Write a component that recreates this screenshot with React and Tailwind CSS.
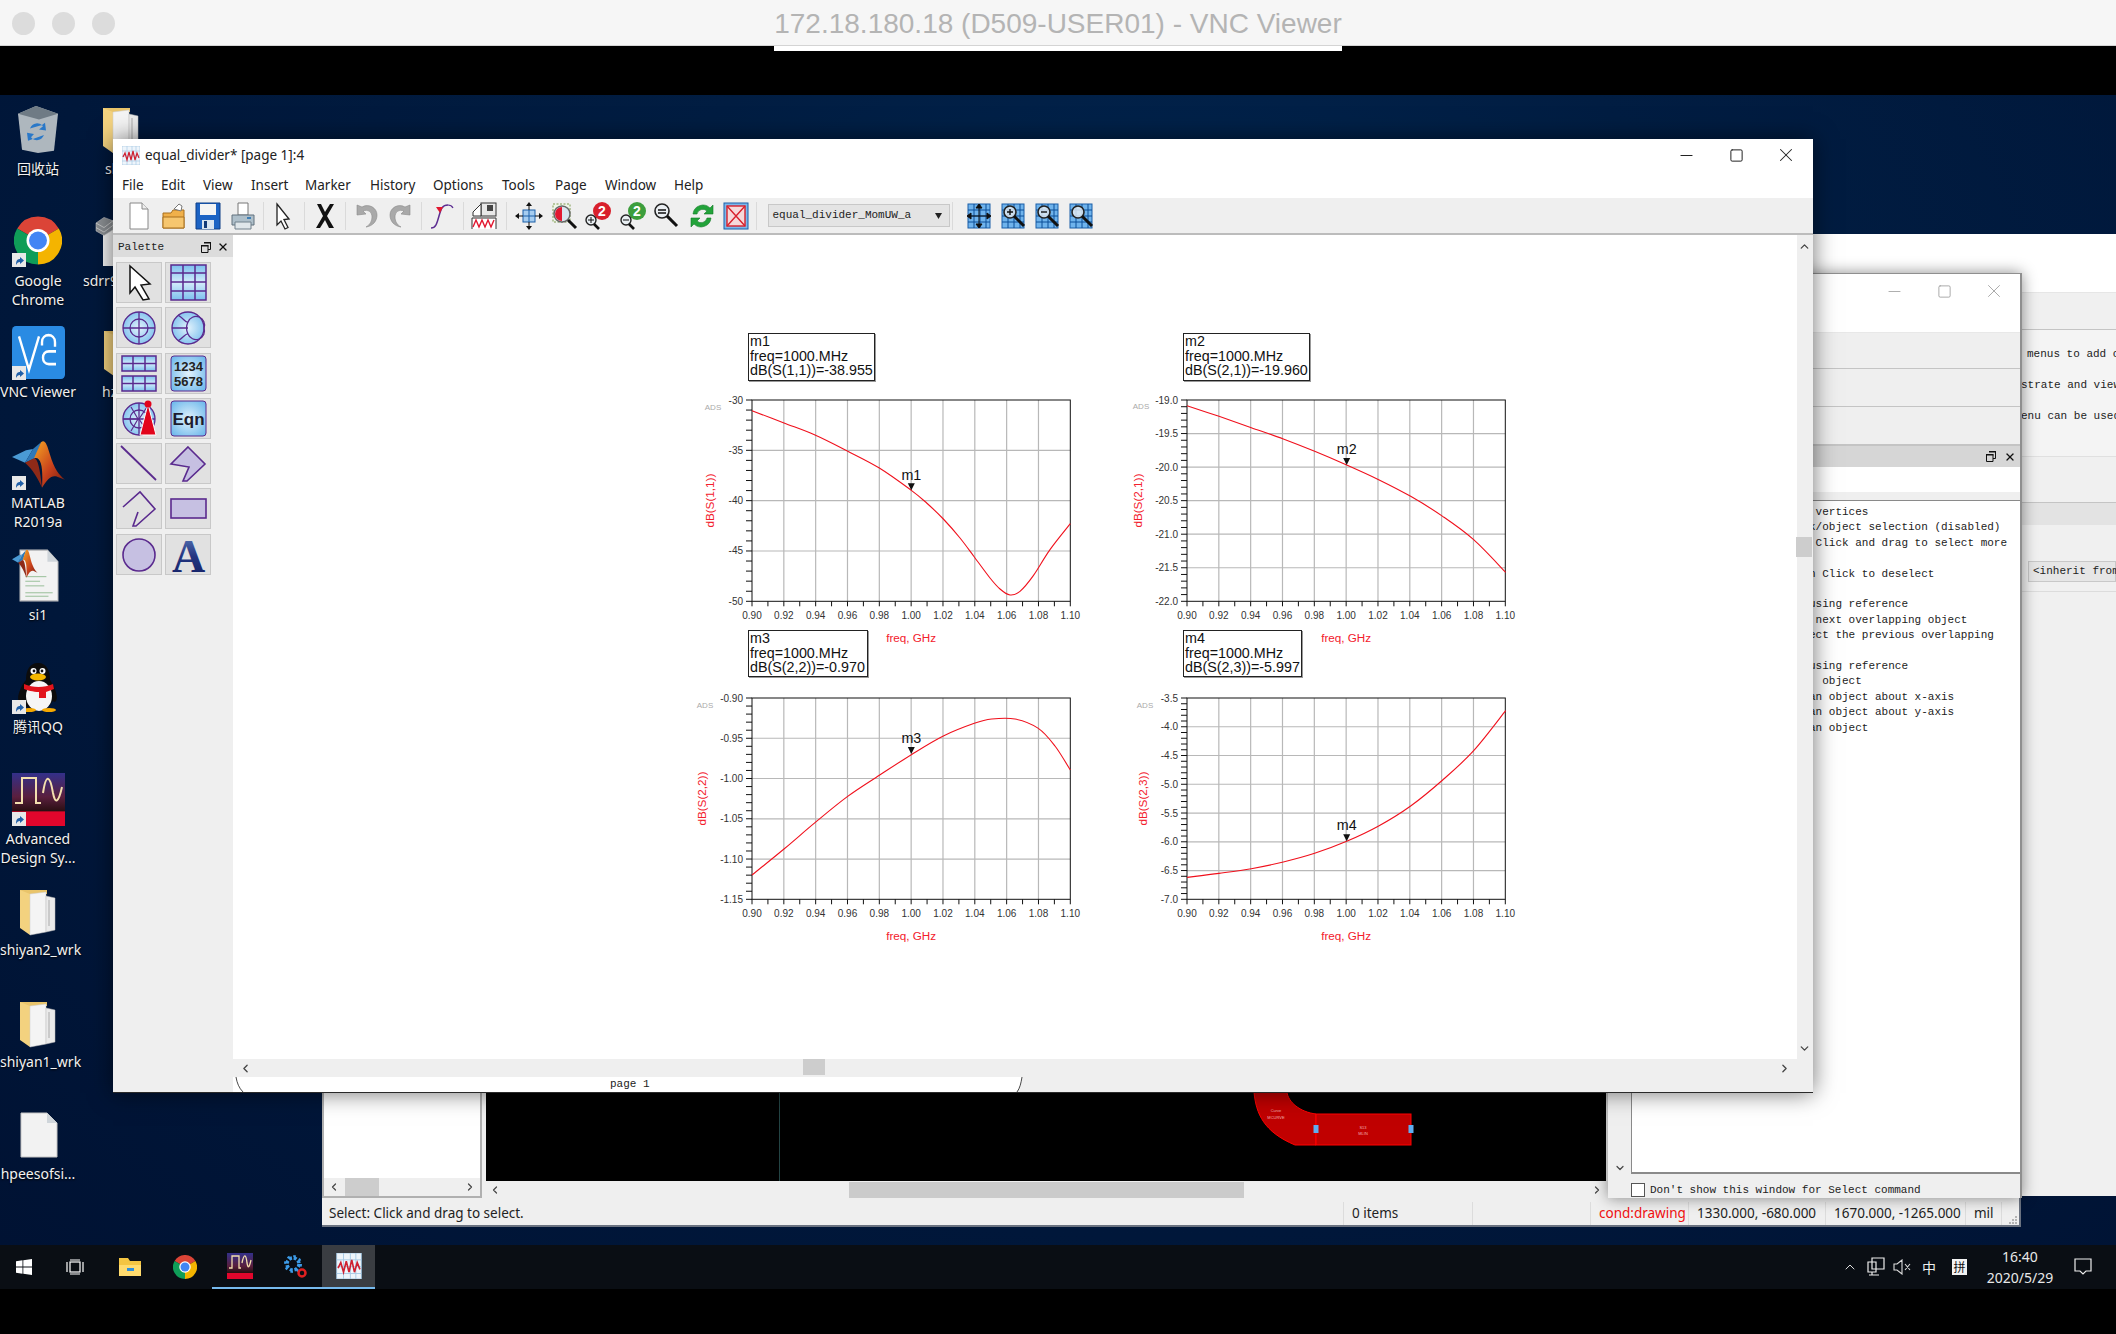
import { ChevronLeft, ChevronRight, ChevronUp, ChevronDown, X, Minus, Square } from "lucide-react";

const smooth = (pts) => {
  let d = `M${pts[0][0]} ${pts[0][1]}`;
  for (let i = 0; i < pts.length - 1; i++) {
    const p0 = pts[i - 1] || pts[i];
    const p1 = pts[i];
    const p2 = pts[i + 1];
    const p3 = pts[i + 2] || p2;
    const c1 = [p1[0] + (p2[0] - p0[0]) / 6, p1[1] + (p2[1] - p0[1]) / 6];
    const c2 = [p2[0] - (p3[0] - p1[0]) / 6, p2[1] - (p3[1] - p1[1]) / 6];
    d += ` C${c1[0]} ${c1[1]} ${c2[0]} ${c2[1]} ${p2[0]} ${p2[1]}`;
  }
  return d;
};

const PLOT_W = 318.3;
const PLOT_H = 201.3;
const X_LABELS = ["0.90", "0.92", "0.94", "0.96", "0.98", "1.00", "1.02", "1.04", "1.06", "1.08", "1.10"];

// points are read off the 3x crops, cx/cy is the plot corner in that crop
function Chart({ className, name, ylabel, ylabels, ylabelX, adsX, adsY, cx, cy, points, tip, labelY }) {
  const ox = 60;
  const oy = 15;
  const pts = points.map(([a, b]) => [(a - cx) / 3, (b - cy) / 3]);
  const n = ylabels.length - 1;
  const tx = (tip[0] - cx) / 3;
  const ty = (tip[1] - cy) / 3;
  return (
    <svg className={`absolute ${className}`} width="430" height="260" viewBox="0 0 430 260">
      <g transform={`translate(${ox} ${oy})`} fontFamily="Liberation Sans, sans-serif">
        {X_LABELS.map((l, i) => {
          const x = (i * PLOT_W) / 10;
          return (
            <g key={l}>
              {i > 0 && i < 10 && <line x1={x} x2={x} y1="0" y2={PLOT_H} stroke="#b8b8b8" strokeWidth="1.2" />}
              <text x={x} y={PLOT_H + 18} fontSize="10" textAnchor="middle" fill="#333">{l}</text>
            </g>
          );
        })}
        {Array.from({ length: 21 }).map((_, i) => (
          <line key={i} x1={(i * PLOT_W) / 20} x2={(i * PLOT_W) / 20} y1={PLOT_H} y2={PLOT_H + 5} stroke="#111" />
        ))}
        {ylabels.map((l, i) => {
          const y = (i * PLOT_H) / n;
          return (
            <g key={l}>
              {i > 0 && i < n && <line x1="0" x2={PLOT_W} y1={y} y2={y} stroke="#b8b8b8" strokeWidth="1.2" />}
              <text x="-9" y={y + 3.5} fontSize="10" textAnchor="end" fill="#333">{l}</text>
            </g>
          );
        })}
        {Array.from({ length: n * 5 + 1 }).map((_, i) => {
          const y = (i * PLOT_H) / (n * 5);
          return <line key={i} x1="-6" x2="0" y1={y} y2={y} stroke="#111" />;
        })}
        <rect x="0" y="0" width={PLOT_W} height={PLOT_H} fill="none" stroke="#111" strokeWidth="1" />
        <path d={smooth(pts)} fill="none" stroke="#f0101c" strokeWidth="1.1" />
        <polygon points={`${tx - 3.5},${ty - 7} ${tx + 3.5},${ty - 7} ${tx},${ty}`} fill="#111" />
        <text x={tx} y={(labelY - cy) / 3 + 5} fontSize="14.3" textAnchor="middle" fill="#111">{name}</text>
        <text x={PLOT_W / 2} y={PLOT_H + 41} fontSize="11.7" textAnchor="middle" fill="#f3202c">freq, GHz</text>
        <text
          transform={`translate(${ylabelX} ${PLOT_H / 2}) rotate(-90)`}
          fontSize="11.7"
          textAnchor="middle"
          dominantBaseline="middle"
          fill="#f3202c"
        >
          {ylabel}
        </text>
        <text x={adsX} y={adsY} fontSize="8" textAnchor="middle" fill="#aaa">ADS</text>
      </g>
    </svg>
  );
}

function MarkerBox({ className, name, value }) {
  return (
    <div className={`absolute border-[1.5px] border-[#222] pl-[1px] text-[14.3px] leading-[14.5px] text-[#111] shadow-[1px_1px_0_#999] ${className}`}>
      <div>{name}</div>
      <div>freq=1000.MHz</div>
      <div>{value}</div>
    </div>
  );
}

const Tb = ({ children, className = "" }) => (
  <svg className={`shrink-0 ${className}`} width="28" height="28" viewBox="0 0 28 28">{children}</svg>
);
const Slot = ({ children }) => <div className="flex w-[34.5px] shrink-0 items-center justify-center">{children}</div>;
const Sep = ({ className }) => (
  <div className={`flex shrink-0 justify-center ${className}`}><div className="h-[28px] w-[1px] bg-[#dadada]" /></div>
);
const Ctl = ({ children }) => <div className="flex w-[50px] shrink-0 items-center justify-center">{children}</div>;

const Mag = ({ x = 10, y = 10, r = 6 }) => (
  <>
    <circle cx={x} cy={y} r={r} fill="#e8eef2" fillOpacity=".8" stroke="#222" strokeWidth="1.6" />
    <line x1={x + r * 0.7} y1={y + r * 0.7} x2={x + r + 8} y2={y + r + 8} stroke="#111" strokeWidth="3" />
  </>
);
const GridIcon = ({ children }) => (
  <Tb>
    <rect x="3" y="2" width="22" height="24" fill="#6fb3ec" stroke="#1b5fa8" />
    {[8, 14, 20].map((v) => <line key={v} x1={v + 1} x2={v + 1} y1="2" y2="26" stroke="#0d4f98" />)}
    {[8, 14, 20].map((v) => <line key={v} x1="3" x2="25" y1={v} y2={v} stroke="#0d4f98" />)}
    {children}
  </Tb>
);

function Toolbar() {
  return (
    <div className="flex h-[37px] shrink-0 items-center border-b-2 border-[#bcbcbc] bg-[#efefef] pl-[9px]">
      <Slot>
        <Tb><path d="M5 1h12l6 6v20H5z" fill="#fff" stroke="#888" /><path d="M17 1v6h6" fill="#eee" stroke="#888" /></Tb>
      </Slot>
      <Slot>
        <Tb>
          <path d="M3 11h8l2-3h11v18H3z" fill="#f0b04a" stroke="#a86f1c" />
          <path d="M14 7l5-5 3 2-1 5z" fill="#fff" stroke="#777" />
          <path d="M3 15h21v11H3z" fill="#f6c66f" stroke="#a86f1c" />
        </Tb>
      </Slot>
      <Slot>
        <Tb>
          <path d="M2 1h24v26H2z" fill="#1c63c4" stroke="#0f3f86" />
          <rect x="6" y="2" width="16" height="11" fill="#f4f4f4" />
          <rect x="8" y="18" width="12" height="9" fill="#d9e4f0" />
          <rect x="10" y="19" width="3" height="7" fill="#123a78" />
        </Tb>
      </Slot>
      <Slot>
        <Tb>
          <path d="M9 1h10v12H9z" fill="#fff" stroke="#777" />
          <path d="M3 13h22v10H3z" fill="#aebfca" stroke="#60707c" />
          <path d="M6 20h16v7H6z" fill="#dfe6ea" stroke="#70808c" />
          <rect x="18" y="15" width="4" height="2" fill="#3f7fb5" />
        </Tb>
      </Slot>
      <Sep className="w-[6px]" />
      <Slot>
        <Tb><path d="M8 2l12 15-5 .5 4 8-3 1.5-4-8-4 4z" fill="#fff" stroke="#222" strokeWidth="1.3" /></Tb>
      </Slot>
      <Sep className="w-[7px]" />
      <Slot>
        <Tb><path d="M6 2h4l4 8 5-8h4l-7 12 7 12h-5l-4-8-5 8H5l7-12z" fill="#111" /></Tb>
      </Slot>
      <Sep className="w-[7px]" />
      <Slot>
        <Tb>
          <path d="M5 3v10l9-1-3-3c5-2 9 1 9 6 0 4-2 8-6 10 7-1 11-6 11-12 0-7-8-12-15-8z" fill="#a9a9a9" stroke="#8a8a8a" strokeWidth=".6" />
        </Tb>
      </Slot>
      <Slot>
        <Tb>
          <path d="M23 3v10l-9-1 3-3c-5-2-9 1-9 6 0 4 2 8 6 10-7-1-11-6-11-12 0-7 8-12 15-8z" fill="#a9a9a9" stroke="#8a8a8a" strokeWidth=".6" />
        </Tb>
      </Slot>
      <Sep className="w-[7px]" />
      <Slot>
        <Tb>
          <path d="M3 26c5 0 6-5 8-12s3-11 9-11" fill="none" stroke="#5c2d91" strokeWidth="1.5" />
          <path d="M8 5l7 0-3 6z" fill="#e21830" />
          <path d="M20 3c3 0 4 1 5 3" fill="none" stroke="#5c2d91" strokeWidth="1.2" />
        </Tb>
      </Slot>
      <Sep className="w-[7px]" />
      <Slot>
        <Tb>
          <rect x="11" y="1" width="15" height="13" fill="#e8e8e8" stroke="#333" />
          <rect x="17" y="3" width="6" height="6" fill="#444" />
          <path d="M3 10l8-8v12H3z" fill="#fff" stroke="#333" />
          <path d="M2 27v-11h24v11" fill="#fff" stroke="#333" />
          <path d="M3 25l3-7 3 7 3-7 3 7 3-7 3 7 3-7" fill="none" stroke="#e21830" strokeWidth="1.4" />
        </Tb>
      </Slot>
      <Sep className="w-[11px]" />
      <Slot>
        <Tb>
          <rect x="8" y="8" width="12" height="12" fill="#a6cdf0" stroke="#1b5fa8" />
          <path d="M14 8v12M8 14h12" stroke="#1b5fa8" />
          <path d="M14 0l3 4h-6zM14 28l3-4h-6zM0 14l4-3v6zM28 14l-4-3v6z" fill="#111" />
          <path d="M14 4v4M14 20v4M4 14h4M20 14h4" stroke="#111" />
        </Tb>
      </Slot>
      <Slot>
        <Tb>
          <rect x="3" y="2" width="17" height="18" fill="#eef6e8" stroke="#7f9a50" strokeDasharray="2 1.5" />
          <circle cx="12" cy="12" r="8" fill="#d9e4ee" stroke="#666" strokeWidth="1.5" />
          <path d="M12 5a7 7 0 0 0-7 7 7 7 0 0 0 7 7z" fill="#e21830" />
          <line x1="18" y1="18" x2="26" y2="26" stroke="#111" strokeWidth="3" />
        </Tb>
      </Slot>
      <Slot>
        <Tb>
          <circle cx="18" cy="9" r="9" fill="#d8202c" />
          <text x="18" y="14" fontSize="14" fontWeight="700" textAnchor="middle" fill="#fff" fontFamily="Liberation Sans">2</text>
          <circle cx="7" cy="18" r="5" fill="#e8eef2" stroke="#222" strokeWidth="1.4" />
          <path d="M4 18h6M7 15v6" stroke="#111" />
          <line x1="10" y1="22" x2="15" y2="27" stroke="#111" strokeWidth="2.6" />
        </Tb>
      </Slot>
      <Slot>
        <Tb>
          <circle cx="18" cy="9" r="9" fill="#3c9e3c" />
          <text x="18" y="14" fontSize="14" fontWeight="700" textAnchor="middle" fill="#fff" fontFamily="Liberation Sans">2</text>
          <circle cx="7" cy="18" r="5" fill="#e8eef2" stroke="#222" strokeWidth="1.4" />
          <path d="M4 18h6" stroke="#111" />
          <line x1="10" y1="22" x2="15" y2="27" stroke="#111" strokeWidth="2.6" />
        </Tb>
      </Slot>
      <Slot>
        <Tb>
          <Mag x={9} y={9} r={7} />
          <path d="M5 8h8M5 11h8" stroke="#111" strokeWidth="1.4" />
        </Tb>
      </Slot>
      <Slot>
        <Tb>
          <path d="M5 12A10 10 0 0 1 22 6l3-3v9h-9l3-3A6 6 0 0 0 9 12z" fill="#22a33a" stroke="#127a26" strokeWidth=".6" />
          <path d="M23 16A10 10 0 0 1 6 22l-3 3v-9h9l-3 3a6 6 0 0 0 10-3z" fill="#22a33a" stroke="#127a26" strokeWidth=".6" />
        </Tb>
      </Slot>
      <Slot>
        <Tb>
          <rect x="2" y="1" width="24" height="26" fill="#7db7ea" stroke="#1b5fa8" />
          <rect x="5" y="4" width="18" height="20" fill="#f6d9da" stroke="#d8202c" strokeWidth="1.4" />
          <path d="M5 4l18 20M23 4L5 24" stroke="#d8202c" strokeWidth="1.4" />
        </Tb>
      </Slot>
      <Sep className="w-[5px]" />
      <div className="ml-[9px] flex h-[23px] w-[182px] shrink-0 items-center justify-between border border-[#c8c8c8] bg-[#e4e4e4] pr-[7px] pl-[4px] font-['Liberation_Mono'] text-[11px] text-[#222]">
        <span>equal_divider_MomUW_a</span>
        <svg width="7" height="6" viewBox="0 0 7 6"><path d="M0 0h7L3.500 6z" fill="#222" /></svg>
      </div>
      <Sep className="w-[5px]" />
      <div className="ml-[7px] flex">
        {[
          <path key="a" d="M14 3v22M3 14h22M14 2l3 4h-6zM14 26l3-4h-6zM2 14l4-3v6zM26 14l-4-3v6z" stroke="#111" fill="#111" strokeWidth="1" />,
          <g key="b"><Mag x={11} y={10} r={6} /><path d="M8 10h6M11 7v6" stroke="#111" strokeWidth="1.4" /></g>,
          <g key="c"><Mag x={11} y={10} r={6} /><path d="M8 10h6" stroke="#111" strokeWidth="1.4" /></g>,
          <g key="d"><Mag x={11} y={10} r={6} /></g>,
        ].map((icon, i) => (
          <div key={i} className="flex w-[34px] shrink-0 justify-center"><GridIcon>{icon}</GridIcon></div>
        ))}
      </div>
    </div>
  );
}

const PURPLE = "#5a2a8e";
const Sky = () => (
  <defs>
    <linearGradient id="sky" x1="0" y1="0" x2="0" y2="1">
      <stop offset="0" stopColor="#7cc0ee" />
      <stop offset=".5" stopColor="#d3ecfb" />
      <stop offset="1" stopColor="#7cc0ee" />
    </linearGradient>
    <radialGradient id="sky2" cx=".5" cy=".5" r=".7">
      <stop offset="0" stopColor="#e2f2fc" />
      <stop offset="1" stopColor="#64b4ea" />
    </radialGradient>
    <linearGradient id="navy" x1="0" y1="0" x2="0" y2="1">
      <stop offset="0" stopColor="#5f7fc0" />
      <stop offset=".5" stopColor="#23357f" />
      <stop offset="1" stopColor="#111d62" />
    </linearGradient>
  </defs>
);
const Polar = () => (
  <g fill="none" stroke={PURPLE} strokeWidth="1.3">
    <circle cx="23" cy="21" r="16" fill="url(#sky2)" />
    <circle cx="23" cy="21" r="9" />
    <path d="M7 21h32M23 5v32" />
  </g>
);
const Smith = () => (
  <g fill="none" stroke={PURPLE} strokeWidth="1.3">
    <circle cx="23" cy="21" r="16" fill="url(#sky2)" />
    <path d="M39 21a8 8 0 0 0-16-6c-2 4-2 8 0 12a8 8 0 0 0 16-6zM13 8c6 4 8 8 10 7M13 34c6-4 8-8 10-7M7 21h16" />
  </g>
);
const Table = ({ y, h }) => (
  <g fill="none" stroke={PURPLE} strokeWidth="1.5">
    <rect x="6" y={y} width="34" height={h} fill="url(#sky)" />
    <path d={`M6 ${y + h / 2}h34M17 ${y}v${h}M29 ${y}v${h}`} />
  </g>
);

const PALETTE = [
  <path key="0" d="M14 4L34 22 25 23 33 37 27 38 19 25 14 31Z" fill="#fff" stroke="#111" strokeWidth="1.5" />,
  <g key="1" fill="none" stroke={PURPLE} strokeWidth="1.5">
    <rect x="6" y="3" width="35" height="35" fill="url(#sky)" />
    <path d="M18 3v35M30 3v35M6 11h35M6 20h35M6 29h35" />
  </g>,
  <Polar key="2" />,
  <Smith key="3" />,
  <g key="4"><Table y={3} h={15} /><Table y={23} h={15} /></g>,
  <g key="5">
    <rect x="6" y="3" width="35" height="35" rx="3" fill="url(#sky2)" stroke={PURPLE} />
    <text x="23.500" y="18" fontSize="13" fontWeight="700" textAnchor="middle" fill="#222" fontFamily="Liberation Sans">1234</text>
    <text x="23.500" y="33" fontSize="13" fontWeight="700" textAnchor="middle" fill="#222" fontFamily="Liberation Sans">5678</text>
  </g>,
  <g key="6">
    <Polar />
    <path d="M15 9l7 12-7 12M31 9l-8 12 8 12M7 21h16" stroke={PURPLE} fill="none" strokeWidth="1.2" />
    <path d="M32 6L40 37H24Z" fill="#e2041b" stroke="#fff" />
    <circle cx="32" cy="6" r="3.500" fill="#e2041b" />
  </g>,
  <g key="7">
    <rect x="6" y="3" width="35" height="35" rx="3" fill="url(#sky2)" stroke={PURPLE} />
    <text x="23.500" y="27" fontSize="17" fontWeight="700" textAnchor="middle" fill="#1c1c2e" fontFamily="Liberation Sans">Eqn</text>
  </g>,
  <line key="8" x1="5" y1="3" x2="40" y2="37" stroke={PURPLE} strokeWidth="1.8" />,
  <path key="9" d="M23 4L40 21 22 38 18 38 24 24 6 21Z" fill="#c6c0e2" stroke={PURPLE} strokeWidth="1.6" />,
  <path key="10" d="M7 19L24 4 39 21 20 38 17 38 22 24" fill="none" stroke={PURPLE} strokeWidth="1.6" />,
  <rect key="11" x="6" y="11" width="35" height="19" fill="#c6c0e2" stroke={PURPLE} strokeWidth="1.6" />,
  <circle key="12" cx="23" cy="21" r="16" fill="#c6c0e2" stroke={PURPLE} strokeWidth="1.6" />,
  <text key="13" x="23.500" y="38" fontSize="46" fontWeight="700" textAnchor="middle" fill="url(#navy)" fontFamily="Liberation Serif">A</text>,
];

function Palette() {
  return (
    <div className="flex w-[120px] shrink-0 flex-col bg-[#efefef]">
      <div className="flex h-[22px] shrink-0 items-center justify-between bg-[#dcdcdc] pt-[2px] pr-[4px] pl-[5px] font-['Liberation_Mono'] text-[11px] text-[#222]">
        <span>Palette</span>
        <div className="flex items-center gap-[6px]">
          <RestoreIcon />
          <X size={12} strokeWidth={2.6} color="#111" />
        </div>
      </div>
      <svg className="h-0 w-0"><Sky /></svg>
      <div className="mt-[5px] grid grid-cols-[46px_46px] gap-x-[3px] gap-y-[4.300px] pl-[3px]">
        {PALETTE.map((icon, i) => (
          <div key={i} className="h-[41px] w-[46px] border border-[#c8c8c8] bg-[#e1e1e1]">
            <svg width="44" height="39" viewBox="1 1 44 39">{icon}</svg>
          </div>
        ))}
      </div>
    </div>
  );
}

const RestoreIcon = () => (
  <svg width="10" height="11" viewBox="0 0 10 11">
    <path d="M3 .5h6.500v7H7M.5 3.500h6.500v7H.5z" fill="none" stroke="#111" />
    <path d="M0 3h7.500v1.500H0zM3 0h7v1.500H3z" fill="#111" />
  </svg>
);

function MainWindow() {
  const menus = [
    ["File", "w-[39px]"], ["Edit", "w-[42px]"], ["View", "w-[48px]"], ["Insert", "w-[54px]"], ["Marker", "w-[65px]"],
    ["History", "w-[63px]"], ["Options", "w-[69px]"], ["Tools", "w-[53px]"], ["Page", "w-[50px]"], ["Window", "w-[69px]"], ["Help", "w-[40px]"],
  ];
  return (
    <div className="absolute top-[139px] left-[113px] z-30 flex h-[954px] w-[1700px] flex-col border-b border-[#2a2a2a] bg-white shadow-[0_0_22px_rgba(0,0,0,0.55)] font-['Noto_Sans'] text-[13.500px] text-[#222]">
      <div className="flex h-[32px] shrink-0 items-center pl-[9px]">
        <AdsChartIcon className="h-[19px] w-[18px]" />
        <span className="ml-[5px] text-[#222]">equal_divider* [page 1]:4</span>
        <div className="ml-auto flex items-center pr-[2px]">
          <Ctl><Minus size={19} strokeWidth={1.4} color="#222" /></Ctl>
          <Ctl><Square size={15} strokeWidth={1.6} color="#222" /></Ctl>
          <Ctl><X size={22} strokeWidth={1.1} color="#222" /></Ctl>
        </div>
      </div>
      <div className="flex h-[27px] shrink-0 items-center pt-[2px] pl-[9px]">
        {menus.map(([m, w]) => <span key={m} className={`${w} shrink-0`}>{m}</span>)}
      </div>
      <Toolbar />
      <div className="flex min-h-0 flex-1">
        <Palette />
        <div className="flex min-w-0 flex-1 flex-col">
          <div className="flex min-h-0 flex-1">
            <div className="relative min-w-0 flex-1 overflow-hidden bg-white font-['Liberation_Sans']">
              <MarkerBox className="top-[98px] left-[515px] h-[48px] w-[127px]" name="m1" value="dB(S(1,1))=-38.955" />
              <MarkerBox className="top-[98px] left-[950px] h-[48px] w-[127px]" name="m2" value="dB(S(2,1))=-19.960" />
              <MarkerBox className="top-[395px] left-[515px] h-[47px] w-[120px]" name="m3" value="dB(S(2,2))=-0.970" />
              <MarkerBox className="top-[395px] left-[950px] h-[47px] w-[119px]" name="m4" value="dB(S(2,3))=-5.997" />
              <Chart
                className="top-[150.300px] left-[459px]" name="m1" ylabel="dB(S(1,1))"
                ylabels={["-30", "-35", "-40", "-45", "-50"]} ylabelX={-41} adsX={-39} adsY={10}
                cx={216} cy={241} tip={[694, 512]} labelY={465}
                points={[[216, 273], [312, 310], [405, 346], [502, 394], [598, 445], [694, 512], [740, 550], [790, 598], [840, 655], [883, 712], [930, 775], [960, 808], [990, 826], [1020, 815], [1060, 768], [1110, 690], [1171, 612]]}
              />
              <Chart
                className="top-[150.300px] left-[893.670px]" name="m2" ylabel="dB(S(2,1))"
                ylabels={["-19.0", "-19.5", "-20.0", "-20.5", "-21.0", "-21.5", "-22.0"]} ylabelX={-48} adsX={-46} adsY={9}
                cx={200} cy={241} tip={[679, 436]} labelY={388}
                points={[[200, 258], [296, 290], [393, 324], [489, 358], [583, 395], [679, 436], [775, 480], [871, 530], [967, 590], [1060, 660], [1156, 758]]}
              />
              <Chart
                className="top-[448px] left-[459px]" name="m3" ylabel="dB(S(2,2))"
                ylabels={["-0.90", "-0.95", "-1.00", "-1.05", "-1.10", "-1.15"]} ylabelX={-49} adsX={-47} adsY={10}
                cx={216} cy={234} tip={[694, 402]} labelY={354}
                points={[[216, 765], [312, 687], [405, 608], [502, 530], [598, 466], [694, 404], [790, 348], [883, 310], [935, 297], [1005, 297], [1075, 325], [1125, 378], [1171, 450]]}
              />
              <Chart
                className="top-[448px] left-[893.670px]" name="m4" ylabel="dB(S(2,3))"
                ylabels={["-3.5", "-4.0", "-4.5", "-5.0", "-5.5", "-6.0", "-6.5", "-7.0"]} ylabelX={-43} adsX={-42} adsY={10}
                cx={200} cy={234} tip={[679, 664]} labelY={615}
                points={[[200, 772], [296, 760], [393, 746], [489, 726], [583, 700], [679, 664], [775, 618], [871, 558], [967, 480], [1060, 392], [1156, 272]]}
              />
            </div>
            <div className="flex w-[16px] shrink-0 flex-col items-center justify-between bg-[#efefef] pt-[5px] pr-[2px] pb-[4px]">
              <ChevronUp size={13} strokeWidth={2.4} color="#444" />
              <div className="absolute top-[398px] h-[20px] w-[16px] bg-[#cdcdcd]" />
              <ChevronDown size={13} strokeWidth={2.4} color="#444" />
            </div>
          </div>
          <div className="relative flex h-[18px] shrink-0 items-center justify-between bg-[#efefef] px-[6px]">
            <ChevronLeft size={13} strokeWidth={2.4} color="#444" />
            <div className="absolute top-0 left-[570px] h-[16px] w-[22px] bg-[#cdcdcd]" />
            <ChevronRight size={13} strokeWidth={2.4} color="#444" className="mr-[16px]" />
          </div>
          <div className="relative h-[15px] shrink-0 bg-[#efefef]">
            <svg className="absolute top-0 left-0" width="800" height="15" viewBox="0 0 800 15">
              <path d="M0 0h789c-1 6-2 11-5 15H0z" fill="#fff" />
              <path d="M3 0c1 6 3 11 7 15M789 0c-1 6-2 11-5 15" fill="none" stroke="#333" strokeWidth=".9" />
            </svg>
            <span className="absolute top-[-1px] left-[377px] font-['Liberation_Mono'] text-[11px] leading-[16px] text-[#222]">page 1</span>
          </div>
        </div>
      </div>
    </div>
  );
}

const AdsChartIcon = ({ className }) => (
  <svg className={className} viewBox="0 0 18 19">
    <rect width="18" height="19" fill="#eef5fb" stroke="#9ac0de" strokeWidth=".6" />
    <path d="M0 5h18M0 10h18M0 15h18M5 0v19M10 0v19M14 0v19" stroke="#a9cbe6" strokeWidth=".7" />
    <path d="M1 11l2-4 2 7 2-8 2 8 2-9 2 9 2-7 2 5" fill="none" stroke="#cf2030" strokeWidth="1.2" />
  </svg>
);

function BackWindow() {
  return (
    <div className="absolute top-[234px] right-0 z-10 flex h-[962px] w-[304px] flex-col overflow-hidden bg-[#f0f0f0] font-['Liberation_Mono'] text-[11px] whitespace-pre text-[#222]">
      <div className="h-[59px] shrink-0 border-b border-[#e6e6e6] bg-white" />
      <div className="h-[37px] shrink-0 border-b border-[#c4c4c4]" />
      <div className="flex h-[127px] shrink-0 flex-col border-b border-[#e0e0e0] bg-[#f4f4f4] pt-[17px] leading-[14px]">
        <span className="pl-[215px]">menus to add objects</span>
        <span className="pt-[17px] pl-[209px]">strate and view layers</span>
        <span className="pt-[17px] pl-[209px]">enu can be used to do</span>
      </div>
      <div className="h-[46px] shrink-0 border-b border-[#c4c4c4]" />
      <div className="h-[22px] shrink-0 bg-[#e3e3e3]" />
      <div className="h-[67px] shrink-0 border-b border-[#dcdcdc] pt-[36px] pl-[216px]">
        <div className="flex h-[21px] items-center border border-[#c8c8c8] bg-[#e6e6e6] pl-[4px]">&lt;inherit from layer&gt;</div>
      </div>
    </div>
  );
}

const SELECT_LINES = [
  " vertices",
  "k/object selection (disabled)",
  " Click and drag to select more",
  " ",
  "n Click to deselect",
  " ",
  "using reference",
  " next overlapping object",
  "ect the previous overlapping",
  " ",
  "using reference",
  "  object",
  "an object about x-axis",
  "an object about y-axis",
  "an object",
];

function SelectWindow() {
  return (
    <div className="absolute top-[273px] left-[1608px] z-20 flex h-[925px] w-[414px] flex-col border-t border-r-2 border-[#8f8f8f] bg-[#efefef] font-['Liberation_Mono'] text-[11px] text-[#222] shadow-[0_0_14px_rgba(0,0,0,0.45)]">
      <div className="relative h-[59px] shrink-0 border-b border-[#e8e8e8] bg-white">
        <div className="absolute top-[6px] right-[1px] flex items-center">
          <Ctl><Minus size={19} strokeWidth={1} color="#999" /></Ctl>
          <Ctl><Square size={15} strokeWidth={1.3} color="#999" /></Ctl>
          <Ctl><X size={22} strokeWidth={0.9} color="#999" /></Ctl>
        </div>
      </div>
      <div className="h-[36px] shrink-0 border-b border-[#c4c4c4]" />
      <div className="h-[38px] shrink-0 border-b border-[#c4c4c4]" />
      <div className="h-[39px] shrink-0 border-b-2 border-[#c4c4c4]" />
      <div className="flex h-[21px] shrink-0 items-center justify-end gap-[8px] bg-[#d6d6d6] pr-[4px]">
        <RestoreIcon />
        <X size={12} strokeWidth={2.6} color="#111" />
      </div>
      <div className="h-[25px] shrink-0 bg-white" />
      <div className="h-[8px] shrink-0" />
      <div className="flex h-[674px] shrink-0">
        <div className="flex w-[23px] shrink-0 items-end justify-center">
          <ChevronDown size={12} strokeWidth={2.4} color="#444" />
        </div>
        <div className="flex-1 overflow-hidden border-t border-b-2 border-l border-[#8a8a8a] bg-white pt-[4px] pl-[177px] leading-[15.400px] whitespace-pre">
          {SELECT_LINES.map((l, i) => <div key={i}>{l}</div>)}
        </div>
      </div>
      <div className="flex h-[24px] shrink-0 items-center gap-[5px] pt-[8px] pl-[23px]">
        <div className="h-[14px] w-[14px] border border-[#555] bg-white" />
        <span>Don&#39;t show this window for Select command</span>
      </div>
    </div>
  );
}

function LayoutWindow() {
  return (
    <div className="absolute top-[1060px] left-[322px] z-[15] flex h-[167px] w-[1699px] flex-col border-r-2 border-b-2 border-[#6a7280] bg-[#efefef] font-['Noto_Sans'] text-[13.500px] text-[#222]">
      <div className="flex min-h-0 flex-1">
        <div className="flex w-[160px] shrink-0 flex-col border-x-2 border-b-2 border-[#b0b0b0] bg-white">
          <div className="flex-1" />
          <div className="relative flex h-[18px] items-center justify-between bg-[#efefef] px-[4px]">
            <ChevronLeft size={12} strokeWidth={2.4} color="#444" />
            <div className="absolute top-0 left-[21px] h-[18px] w-[34px] bg-[#cdcdcd]" />
            <ChevronRight size={12} strokeWidth={2.4} color="#444" />
          </div>
        </div>
        <div className="ml-[4px] flex min-w-0 flex-1 flex-col">
          <div className="relative min-h-0 flex-1 overflow-hidden bg-black">
            <div className="absolute top-0 bottom-0 left-[293px] w-[1px] bg-[#234444]" />
            <svg className="absolute top-[32px] left-[764px]" width="170" height="60" viewBox="0 0 170 60">
              <path d="M4 0c2 22 10 40 41 53h21V22C50 20 38 10 37 0z" fill="#c00000" stroke="#ff0000" />
              <rect x="66" y="22" width="95" height="31" fill="#c00000" stroke="#ff0000" />
              <rect x="63.500" y="33" width="5" height="8" fill="#60aef0" />
              <rect x="158.500" y="33" width="5" height="8" fill="#60aef0" />
              <g fontFamily="Liberation Sans" fontSize="4" fill="#f0b0b0" textAnchor="middle">
                <text x="26" y="20">Curve</text>
                <text x="26" y="27">MCURVE</text>
                <text x="113" y="37">S13</text>
                <text x="113" y="43">MLIN</text>
              </g>
            </svg>
          </div>
          <div className="relative flex h-[17px] shrink-0 items-center justify-between px-[3px]">
            <ChevronLeft size={12} strokeWidth={2.4} color="#444" />
            <div className="absolute top-[1px] left-[363px] h-[16px] w-[395px] bg-[#cbcbcb]" />
            <ChevronRight size={12} strokeWidth={2.4} color="#444" />
          </div>
        </div>
        <div className="w-[413px] shrink-0" />
      </div>
      <div className="flex h-[27px] shrink-0 items-center pt-[4px]">
        <div className="w-[1021px] shrink-0 pl-[7px]">Select: Click and drag to select.</div>
        <div className="h-[23px] w-[129px] shrink-0 border-l border-[#dcdcdc] pl-[8px] leading-[23px]">0 items</div>
        <div className="h-[23px] w-[118px] shrink-0 border-l border-[#dcdcdc]" />
        <div className="h-[23px] w-[98px] shrink-0 border-l border-[#dcdcdc] pl-[8px] leading-[23px] text-[#f01010]">cond:drawing</div>
        <div className="h-[23px] w-[137px] shrink-0 border-l border-[#dcdcdc] pl-[8px] leading-[23px]">1330.000, -680.000</div>
        <div className="h-[23px] w-[140px] shrink-0 border-l border-[#dcdcdc] pl-[8px] leading-[23px]">1670.000, -1265.000</div>
        <div className="h-[23px] w-[36px] shrink-0 border-l border-[#dcdcdc] pl-[8px] leading-[23px]">mil</div>
        <div className="flex h-[23px] w-[18px] shrink-0 items-end justify-end border-l border-[#dcdcdc] pr-[2px] pb-[1px]">
          <svg width="8" height="8" viewBox="0 0 8 8" fill="#b4b4b4">
            <rect x="6" y="0" width="2" height="2" /><rect x="3" y="3" width="2" height="2" /><rect x="6" y="3" width="2" height="2" />
            <rect x="0" y="6" width="2" height="2" /><rect x="3" y="6" width="2" height="2" /><rect x="6" y="6" width="2" height="2" />
          </svg>
        </div>
      </div>
    </div>
  );
}

const Shortcut = ({ className = "" }) => (
  <svg className={`absolute ${className}`} width="14" height="14" viewBox="0 0 14 14">
    <rect width="14" height="14" fill="#e8e8e8" />
    <path d="M4 12c0-4 1-6 4-6V4l4 3.500L8 11V9c-2 0-3 1-4 3z" fill="#1f5fa8" />
  </svg>
);

const Folder = ({ className = "" }) => (
  <svg className={className} width="36" height="46" viewBox="0 0 36 46">
    <path d="M0 0h27v4H0z" fill="#e9c46a" />
    <path d="M0 0v38l10 7V4z" fill="#f3d27f" />
    <path d="M10 4l16-2v40l-16 3z" fill="#f4f4f4" stroke="#ccc" strokeWidth=".5" />
    <path d="M26 6l9 2v32l-9 2z" fill="#eaeaea" stroke="#bbb" strokeWidth=".5" />
    <path d="M29 10v26" stroke="#aaa" />
  </svg>
);

const Doc = ({ className = "", w = 38, h = 46, children }) => (
  <svg className={className} width={w} height={h} viewBox="0 0 38 46" preserveAspectRatio="none">
    <path d="M1 1h26l10 10v34H1z" fill="#f2f2f2" stroke="#c4c4c4" />
    <path d="M27 1v10h10z" fill="#cfd5da" />
    {children}
  </svg>
);

const MatlabLogo = ({ className = "", w = 54, h = 44 }) => (
  <svg className={className} width={w} height={h} viewBox="0 0 54 44" preserveAspectRatio="none">
    <defs>
      <linearGradient id="ml" x1="0" y1="0" x2="1" y2="1">
        <stop offset="0" stopColor="#f5a623" />
        <stop offset=".55" stopColor="#c9411c" />
        <stop offset="1" stopColor="#6e1a10" />
      </linearGradient>
    </defs>
    <path d="M0 15l14-6 7-1-8 12z" fill="#4a9ad4" />
    <path d="M21 8l8-6-6 14-10 4z" fill="#2f79b8" />
    <path d="M29 2c4-3 6 2 9 11 4 12 9 18 15 22l-9-3c-5-1-9 3-14 10C31 26 30 14 22 16z" fill="url(#ml)" />
    <path d="M13 20l9-4c4 0 6 10 8 26-4-8-9-16-17-22z" fill="#8f2a18" />
  </svg>
);

function DesktopLabel({ className, children }) {
  return (
    <div className={`absolute z-0 text-center font-['Noto_Sans','Noto_Sans_CJK_SC',sans-serif] text-[14px] leading-[19px] whitespace-nowrap text-[#f2f2f2] [text-shadow:0_1px_2px_#000] ${className}`}>
      {children}
    </div>
  );
}

function DesktopIcons() {
  return (
    <>
      <svg className="absolute top-[106px] left-[17px]" width="42" height="47" viewBox="0 0 42 42" preserveAspectRatio="none">
        <path d="M1 7l18-7 22 7-4 33-16 2-16-3z" fill="#aeb7be" />
        <path d="M1 7l18-7 22 7-19 5z" fill="#6f7b85" />
        <path d="M13 20a8 8 0 0 1 13-2l-4 3 7 1-1-7-3 2M27 26a8 8 0 0 1-13 2l3-3-7-1 1 7" fill="#2a78c8" />
      </svg>
      <DesktopLabel className="top-[159px] left-0 w-[76px]">回收站</DesktopLabel>

      <Folder className="absolute top-[108px] left-[103px]" />
      <DesktopLabel className="top-[159px] left-[105px]">shiyan</DesktopLabel>

      <svg className="absolute top-[216px] left-[14px]" width="48" height="49" viewBox="0 0 48 48">
        <path d="M24 24L3.200 12A24 24 0 0 1 44.800 12z" fill="#db4437" />
        <path d="M24 24L3.200 12A24 24 0 0 0 24 48z" fill="#0f9d58" />
        <path d="M24 24L44.800 12A24 24 0 0 1 24 48z" fill="#f4b400" />
        <circle cx="24" cy="24" r="11.500" fill="#fff" />
        <circle cx="24" cy="24" r="9" fill="#4285f4" />
      </svg>
      <Shortcut className="top-[253px] left-[12px]" />
      <DesktopLabel className="top-[271px] left-0 w-[76px]">Google<br />Chrome</DesktopLabel>

      <svg className="absolute top-[214px] left-[95px]" width="24" height="52" viewBox="0 0 24 46" preserveAspectRatio="none">
        <rect x="8" y="6" width="16" height="40" fill="#f2f2f2" />
        <path d="M1 8l8-5 9 3v8l-9 5-8-4z" fill="#8b8f93" stroke="#d0d0d0" strokeWidth=".5" />
        <path d="M1 8l8 4 9-6M1 12l8 4 9-6" fill="none" stroke="#d8d8d8" strokeWidth=".7" />
      </svg>
      <DesktopLabel className="top-[271px] left-[83px]">sdrr9</DesktopLabel>

      <svg className="absolute top-[326px] left-[12px]" width="53" height="53" viewBox="0 0 53 46" preserveAspectRatio="none">
        <rect width="53" height="46" rx="4" fill="#2a8be3" />
        <path d="M7 9l10 29 10-29M30 17v-3c0-8 13-8 13 0v4M44 22h-7c-8 0-8 11 0 11h7" fill="none" stroke="#fff" strokeWidth="2.400" />
      </svg>
      <Shortcut className="top-[366px] left-[12px]" />
      <DesktopLabel className="top-[382px] left-0 w-[76px]">VNC Viewer</DesktopLabel>

      <Folder className="absolute top-[331px] left-[104px]" />
      <DesktopLabel className="top-[382px] left-[102px]">hz</DesktopLabel>

      <MatlabLogo className="absolute top-[440px] left-[12px]" w={54} h={50} />
      <Shortcut className="top-[476px] left-[12px]" />
      <DesktopLabel className="top-[493px] left-0 w-[76px]">MATLAB<br />R2019a</DesktopLabel>

      <Doc className="absolute top-[549px] left-[19px]" w={40} h={53}>
        <path d="M6 24h20M6 28h14M6 32h18M6 38h26M6 41h22" stroke="#8db88d" strokeWidth=".8" />
      </Doc>
      <MatlabLogo className="absolute top-[549px] left-[12px]" w={26} h={30} />
      <DesktopLabel className="top-[605px] left-0 w-[76px]">si1</DesktopLabel>

      <svg className="absolute top-[663px] left-[17px]" width="43" height="49" viewBox="0 0 43 49">
        <path d="M21 0c9 0 12 8 12 17 4 6 10 18 5 22-5-4-2 8-17 8S7 35 2 39c-3-5 2-16 7-22C9 8 12 0 21 0z" fill="#0c0c0c" />
        <ellipse cx="22" cy="33" rx="13" ry="15" fill="#f6f6f6" />
        <path d="M7 21c9 4 20 4 29 0l1 5-8 3v6h-7v-6c-6 0-12-2-15-3z" fill="#e2141c" />
        <ellipse cx="21" cy="14" rx="8" ry="3.500" fill="#f5b800" />
        <circle cx="16.500" cy="8" r="3" fill="#fff" /><circle cx="25.500" cy="8" r="3" fill="#fff" />
        <circle cx="17" cy="8" r="1.400" fill="#111" /><circle cx="25" cy="8" r="1.400" fill="#111" />
        <ellipse cx="12" cy="47" rx="7" ry="2" fill="#f5a800" /><ellipse cx="32" cy="47" rx="7" ry="2" fill="#f5a800" />
      </svg>
      <Shortcut className="top-[700px] left-[12px]" />
      <DesktopLabel className="top-[717px] left-0 w-[76px]">腾讯QQ</DesktopLabel>

      <div className="absolute top-[773px] left-[12px] h-[53px] w-[53px] bg-[linear-gradient(180deg,#33308a_0%,#5a1f3e_45%,#2a0f12_72%,#e2062c_73%)]">
        <svg width="53" height="38" viewBox="0 0 53 38">
          <path d="M3 30h7V5h14v25h5M31 20c3-20 7-18 10 0 2 10 5 12 9-6" fill="none" stroke="#f3dfae" strokeWidth="2" />
        </svg>
      </div>
      <Shortcut className="top-[812px] left-[12px]" />
      <DesktopLabel className="top-[829px] left-0 w-[76px]">Advanced<br />Design Sy...</DesktopLabel>

      <Folder className="absolute top-[890px] left-[20px]" />
      <DesktopLabel className="top-[940px] left-0 w-[76px]">shiyan2_wrk</DesktopLabel>
      <Folder className="absolute top-[1002px] left-[20px]" />
      <DesktopLabel className="top-[1052px] left-0 w-[76px]">shiyan1_wrk</DesktopLabel>
      <Doc className="absolute top-[1112px] left-[20px]" />
      <DesktopLabel className="top-[1164px] left-0 w-[76px]">hpeesofsi...</DesktopLabel>
    </>
  );
}

function Taskbar() {
  return (
    <div className="flex h-[44px] shrink-0 items-center bg-[#0a0e14] font-['Noto_Sans'] text-[white]">
      <div className="flex h-full w-[47px] shrink-0 items-center justify-center">
        <svg width="16" height="16" viewBox="0 0 16 16"><path d="M0 2.200l6.500-.9v6.300H0zM7.300 1.200L16 0v7.600H7.300zM0 8.400h6.500v6.300L0 13.800zM7.300 8.400H16V16l-8.700-1.200z" fill="#fff" /></svg>
      </div>
      <div className="flex h-full w-[55px] shrink-0 items-center justify-center">
        <svg width="18" height="16" viewBox="0 0 18 16" fill="none" stroke="#fff" strokeWidth="1.200">
          <rect x="4" y="3" width="10" height="10" /><path d="M1 3v10M17 3v10M4 1h10M4 15h10" />
        </svg>
      </div>
      <div className="flex h-full w-[55px] shrink-0 items-center justify-center">
        <svg width="24" height="20" viewBox="0 0 24 20"><path d="M1 1h9l2 3h11v15H1z" fill="#f4c542" /><rect x="1" y="8" width="22" height="11" fill="#ffdb6e" /><rect x="9" y="11" width="7" height="3" fill="#2d8fdd" /></svg>
      </div>
      <div className="flex h-full w-[55px] shrink-0 items-center justify-center">
        <svg width="24" height="24" viewBox="0 0 48 48">
          <path d="M24 24L3.200 12A24 24 0 0 1 44.800 12z" fill="#db4437" />
          <path d="M24 24L3.200 12A24 24 0 0 0 24 48z" fill="#0f9d58" />
          <path d="M24 24L44.800 12A24 24 0 0 1 24 48z" fill="#f4b400" />
          <circle cx="24" cy="24" r="11.500" fill="#fff" /><circle cx="24" cy="24" r="9" fill="#4285f4" />
        </svg>
      </div>
      <div className="flex h-full w-[55px] shrink-0 items-center justify-center border-b-2 border-[#76b9ed]">
        <div className="h-[26px] w-[26px] bg-[linear-gradient(180deg,#33308a_0%,#5a1f3e_50%,#2a0f12_75%,#e2062c_76%)]">
          <svg width="26" height="20" viewBox="0 0 26 20"><path d="M2 15h3V3h7v12h2M15 10c2-10 4-9 5 0 1 5 2 6 4-3" fill="none" stroke="#f3dfae" strokeWidth="1.300" /></svg>
        </div>
      </div>
      <div className="flex h-full w-[55px] shrink-0 items-center justify-center border-b-2 border-[#76b9ed]">
        <svg width="26" height="26" viewBox="0 0 26 26">
          <circle cx="11" cy="11" r="6" fill="none" stroke="#3c9be8" strokeWidth="3.500" strokeDasharray="3 1.700" />
          <circle cx="11" cy="11" r="8" fill="none" stroke="#3c9be8" strokeWidth="2" strokeDasharray="2.500 3.800" />
          <circle cx="20" cy="20" r="3.500" fill="none" stroke="#e02020" strokeWidth="2.500" />
        </svg>
      </div>
      <div className="flex h-full w-[53px] shrink-0 items-center justify-center border-b-2 border-[#76b9ed] bg-[#3a3d42]">
        <AdsChartIcon className="h-[26px] w-[26px]" />
      </div>
      <div className="ml-auto flex h-full items-center pr-[24px]">
        <ChevronUp size={16} strokeWidth={1.4} color="#eee" className="mr-[9px]" />
        <svg className="mr-[8px]" width="18" height="20" viewBox="0 0 18 20" fill="none" stroke="#eee" strokeWidth="1.200">
          <path d="M5 1h12v11H5zM1 5h8v10H1zM2 18h10M5 15v3" />
        </svg>
        <svg className="mr-[11px]" width="18" height="16" viewBox="0 0 18 16" fill="none" stroke="#ddd" strokeWidth="1.100">
          <path d="M1 5h3l5-4v14l-5-4H1zM12 5l5 6M17 5l-5 6" />
        </svg>
        <span className="mr-[16px] font-['Noto_Sans_CJK_SC'] text-[14px] text-[#eee]">中</span>
        <span className="mr-[18px] flex h-[16px] w-[15px] items-center justify-center bg-[#f2f2f2] font-['Noto_Sans_CJK_SC'] text-[12px] leading-none text-[#111]">拼</span>
        <div className="mr-[19px] flex w-[70px] flex-col items-center text-[14px] leading-[21px] text-[#e8e8e8]">
          <span>16:40</span>
          <span>2020/5/29</span>
        </div>
        <svg width="18" height="18" viewBox="0 0 18 18" fill="none" stroke="#eee" strokeWidth="1.200">
          <path d="M1 1h16v12h-5l-3 3-3-3H1z" />
        </svg>
      </div>
    </div>
  );
}

export default function App() {
  return (
    <div className="relative flex h-[1334px] w-[2116px] flex-col overflow-hidden bg-black font-['Liberation_Sans',sans-serif]">
      <div className="relative flex h-[46px] shrink-0 items-center border-b border-[#d4d4d4] bg-[#f6f6f6]">
        <div className="mt-[2px] ml-[12px] flex gap-[17px]">
          <div className="h-[23px] w-[23px] rounded-full bg-[#dcdcdc]" />
          <div className="h-[23px] w-[23px] rounded-full bg-[#dcdcdc]" />
          <div className="h-[23px] w-[23px] rounded-full bg-[#dcdcdc]" />
        </div>
        <div className="absolute inset-x-0 pt-[3px] text-center text-[28px] leading-[40px] text-[#b4b4b4]">172.18.180.18 (D509-USER01) - VNC Viewer</div>
      </div>
      <div className="h-[49px] shrink-0 bg-black">
        <div className="ml-[774px] h-[5px] w-[568px] bg-white" />
      </div>
      <div className="h-[1150px] shrink-0 bg-[radial-gradient(ellipse_at_55%_25%,#012752_0%,#011d42_35%,#00173a_70%,#001233_100%)]" />
      <Taskbar />
      <div className="h-[45px] shrink-0 bg-black" />
      <DesktopIcons />
      <BackWindow />
      <LayoutWindow />
      <SelectWindow />
      <MainWindow />
    </div>
  );
}
